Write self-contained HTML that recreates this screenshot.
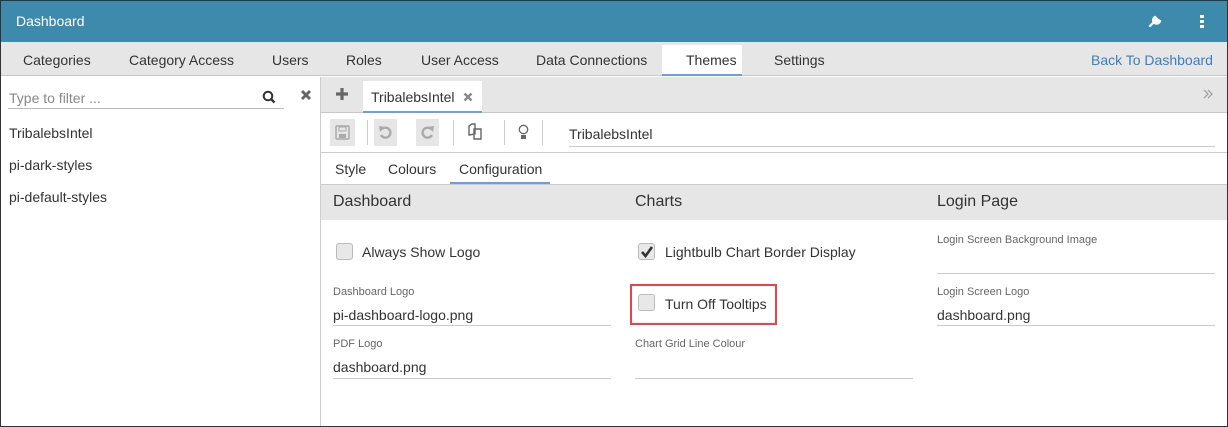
<!DOCTYPE html>
<html><head><style>
*{margin:0;padding:0;box-sizing:border-box}
body{width:1228px;height:427px;overflow:hidden;font-family:"Liberation Sans",sans-serif;color:#333;background:#fff;position:relative}
.a{position:absolute}
.frame{position:absolute;left:0;top:0;width:1228px;height:427px;border:1px solid #333;pointer-events:none;z-index:9}
.cb{position:absolute;width:17px;height:17px;border:1px solid #bbb;border-radius:3px;background:#e8e8e8}
.lbl{font-size:11px;color:#666}
.val{font-size:14px;color:#333}
.line{position:absolute;height:1px;background:#ccc}
.tb{position:absolute;top:119px;width:25px;height:27px;background:#e6e6e6}
.sep{position:absolute;top:120px;width:1px;height:25px;background:#ccc}
</style></head><body>
<div class="a" style="left:0;top:0;width:1228px;height:42px;background:#3e8aac"></div>
<div class="a" style="left:16px;top:13px;font-size:14px;color:#fff">Dashboard</div>
<svg class="a" style="left:1148px;top:13px" width="14" height="14" viewBox="0 0 14 14"><path d="M2 13 L8 7 M7 4 A3.5 3.5 0 1 0 12 8 L10 7 L8 5 Z" stroke="#fff" stroke-width="2.2" fill="#fff" stroke-linecap="round"/></svg>
<div class="a" style="left:1200px;top:15px;width:4px;height:3px;background:#fff;box-shadow:0 5px #fff,0 10px #fff"></div>
<div class="a" style="left:0;top:42px;width:1228px;height:34px;background:#e6e6e6;border-bottom:1px solid #c8c8c8"></div>
<div class="a" style="left:662px;top:45px;width:80px;height:31px;background:#fff;border-bottom:2px solid #6b9fe0"></div>
<div class="a" style="top:52px;font-size:14px;color:#333;left:0;width:1228px">
<span class="a" style="left:23px">Categories</span><span class="a" style="left:129px">Category Access</span><span class="a" style="left:272px">Users</span><span class="a" style="left:346px">Roles</span><span class="a" style="left:421px">User Access</span><span class="a" style="left:536px">Data Connections</span><span class="a" style="left:686px">Themes</span><span class="a" style="left:774px">Settings</span><span class="a" style="left:1091px;color:#3a7fc0">Back To Dashboard</span></div>
<div class="a" style="left:320px;top:77px;width:1px;height:350px;background:#ccc"></div>
<div class="a" style="left:9px;top:90px;font-size:14px;color:#888">Type to filter ...</div>
<div class="line" style="left:8px;top:108px;width:276px;background:#bbb"></div>
<svg class="a" style="left:262px;top:90px" width="14" height="14" viewBox="0 0 14 14"><circle cx="6" cy="6" r="4.3" stroke="#333" stroke-width="2" fill="none"/><path d="M9 9 L12.5 12.5" stroke="#333" stroke-width="2.4"/></svg>
<svg class="a" style="left:300px;top:89px" width="12" height="12" viewBox="0 0 12 12"><path d="M2 2 L10 10 M10 2 L2 10" stroke="#666" stroke-width="3"/></svg>
<div class="a" style="left:9px;top:125px;font-size:14px">TribalebsIntel</div>
<div class="a" style="left:9px;top:157px;font-size:14px">pi-dark-styles</div>
<div class="a" style="left:9px;top:189px;font-size:14px">pi-default-styles</div>
<div class="a" style="left:321px;top:77px;width:906px;height:36px;background:#e6e6e6;border-bottom:1px solid #c8c8c8"></div>
<svg class="a" style="left:335px;top:87px" width="14" height="14" viewBox="0 0 14 14"><path d="M7 1 V13 M1 7 H13" stroke="#666" stroke-width="3.2"/></svg>
<div class="a" style="left:363px;top:81px;width:119px;height:32px;background:#fff;border-bottom:2px solid #6b9fe0"></div>
<div class="a" style="left:371px;top:89px;font-size:14px">TribalebsIntel</div>
<svg class="a" style="left:463px;top:92px" width="10" height="10" viewBox="0 0 10 10"><path d="M1.5 1.5 L8.5 8.5 M8.5 1.5 L1.5 8.5" stroke="#888" stroke-width="2.4"/></svg>
<svg class="a" style="left:1203px;top:89px" width="10" height="10" viewBox="0 0 10 10"><path d="M1 1 L5 5 L1 9 M5 1 L9 5 L5 9" stroke="#999" stroke-width="1.2" fill="none"/></svg>
<div class="tb" style="left:330px"></div>
<svg class="a" style="left:335px;top:125px" width="15" height="15" viewBox="0 0 15 15"><rect x="1" y="1" width="13" height="13" rx="1" stroke="#aaa" stroke-width="1.5" fill="none"/><rect x="4" y="2" width="7" height="4" stroke="#aaa" fill="none"/><rect x="4" y="9" width="7" height="4" fill="#aaa"/></svg>
<div class="sep" style="left:367px"></div>
<div class="tb" style="left:374px;width:23px"></div>
<svg class="a" style="left:378px;top:125px" width="15" height="15" viewBox="0 0 15 15"><path d="M4 4 A5 5 0 1 1 3 10" stroke="#aaa" stroke-width="2.4" fill="none"/><path d="M1 1 L7 2 L2 7 Z" fill="#aaa"/></svg>
<div class="tb" style="left:416px;width:23px"></div>
<svg class="a" style="left:420px;top:125px" width="15" height="15" viewBox="0 0 15 15"><path d="M11 4 A5 5 0 1 0 12 10" stroke="#aaa" stroke-width="2.4" fill="none"/><path d="M14 1 L8 2 L13 7 Z" fill="#aaa"/></svg>
<div class="sep" style="left:453px"></div>
<svg class="a" style="left:466px;top:123px" width="18" height="18" viewBox="0 0 18 18"><path d="M3 12 V3 L6 1 H9 V11 Z M8 6 H15 V16 H8 Z" stroke="#666" stroke-width="1.4" fill="none"/></svg>
<div class="sep" style="left:504px"></div>
<svg class="a" style="left:518px;top:124px" width="11" height="17" viewBox="0 0 11 17"><circle cx="5.5" cy="5.5" r="4.2" stroke="#666" stroke-width="1.3" fill="none"/><rect x="3" y="11" width="5" height="4" fill="#666"/></svg>
<div class="sep" style="left:542px"></div>
<div class="a" style="left:569px;top:126px;font-size:14px">TribalebsIntel</div>
<div class="line" style="left:569px;top:146px;width:646px"></div>
<div class="a" style="left:321px;top:152px;width:906px;height:1px;background:#ccc"></div>
<div class="a" style="left:335px;top:161px;font-size:14px">Style</div>
<div class="a" style="left:388px;top:161px;font-size:14px">Colours</div>
<div class="a" style="left:459px;top:161px;font-size:14px">Configuration</div>
<div class="a" style="left:450px;top:182px;width:100px;height:2px;background:#6b9fe0"></div>
<div class="a" style="left:321px;top:184px;width:906px;height:36px;background:#e6e6e6;border-top:1px solid #ccc"></div>
<div class="a" style="left:333px;top:193px;font-size:16px">Dashboard</div>
<div class="a" style="left:635px;top:193px;font-size:16px">Charts</div>
<div class="a" style="left:937px;top:193px;font-size:16px">Login Page</div>
<div class="cb" style="left:336px;top:243px"></div>
<div class="a val" style="left:362px;top:244px">Always Show Logo</div>
<div class="cb" style="left:638px;top:243px"></div>
<svg class="a" style="left:640px;top:245px" width="14" height="14" viewBox="0 0 14 14"><path d="M2 7 L5.5 11 L12 2" stroke="#333" stroke-width="2.6" fill="none"/></svg>
<div class="a val" style="left:665px;top:244px">Lightbulb Chart Border Display</div>
<div class="a lbl" style="left:333px;top:286px">Dashboard Logo</div>
<div class="a val" style="left:333px;top:307px">pi-dashboard-logo.png</div>
<div class="line" style="left:333px;top:325px;width:278px"></div>
<div class="a lbl" style="left:333px;top:338px">PDF Logo</div>
<div class="a val" style="left:333px;top:359px">dashboard.png</div>
<div class="line" style="left:333px;top:378px;width:278px"></div>
<div class="a" style="left:630px;top:284px;width:147px;height:41px;border:2px solid #f04048"></div>
<div class="cb" style="left:638px;top:294px"></div>
<div class="a val" style="left:665px;top:296px">Turn Off Tooltips</div>
<div class="a lbl" style="left:635px;top:338px">Chart Grid Line Colour</div>
<div class="line" style="left:635px;top:378px;width:278px"></div>
<div class="a lbl" style="left:937px;top:234px">Login Screen Background Image</div>
<div class="line" style="left:937px;top:273px;width:278px"></div>
<div class="a lbl" style="left:937px;top:286px">Login Screen Logo</div>
<div class="a val" style="left:937px;top:307px">dashboard.png</div>
<div class="line" style="left:937px;top:325px;width:278px"></div>
<div class="frame"></div>
</body></html>
